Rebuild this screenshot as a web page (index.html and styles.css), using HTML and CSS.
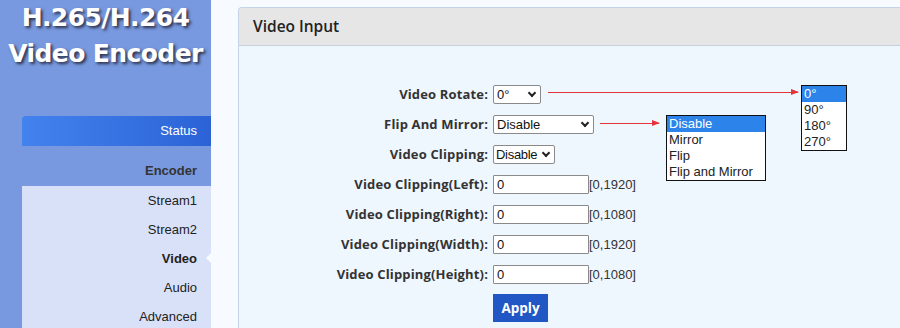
FILE: index.html
```html
<!DOCTYPE html>
<html>
<head>
<meta charset="utf-8">
<link rel="stylesheet" href="styles.css">
</head>
<body>
<aside class="sidebar">
  <div class="logo">
    <div class="logo-line">H.265/H.264</div>
    <div class="logo-line">Video Encoder</div>
  </div>
  <nav class="nav">
    <div class="nav-status">Status</div>
    <div class="nav-group">Encoder</div>
    <ul class="nav-sub">
      <li>Stream1</li>
      <li>Stream2</li>
      <li class="active">Video</li>
      <li>Audio</li>
      <li>Advanced</li>
    </ul>
  </nav>
</aside>
<main class="main">
  <section class="panel">
    <header class="panel-head">Video Input</header>
    <div class="form">
      <label class="lbl">Video Rotate:</label>
      <div class="ctl">
        <span class="sel sel-rot">0°<i class="chev"></i></span>
        <span class="arrow arrow-rot"></span>
        <ul class="dd dd-rot"><li class="on">0°</li><li>90°</li><li>180°</li><li>270°</li></ul>
      </div>
      <label class="lbl">Flip And Mirror:</label>
      <div class="ctl">
        <span class="sel sel-flip">Disable<i class="chev"></i></span>
        <span class="arrow arrow-flip"></span>
        <ul class="dd dd-flip"><li class="on">Disable</li><li>Mirror</li><li>Flip</li><li>Flip and Mirror</li></ul>
      </div>
      <label class="lbl">Video Clipping:</label>
      <div class="ctl"><span class="sel sel-clip">Disable<i class="chev"></i></span></div>
      <label class="lbl">Video Clipping(Left):</label>
      <div class="ctl"><span class="inp">0</span><span class="rng">[0,1920]</span></div>
      <label class="lbl">Video Clipping(Right):</label>
      <div class="ctl"><span class="inp">0</span><span class="rng">[0,1080]</span></div>
      <label class="lbl">Video Clipping(Width):</label>
      <div class="ctl"><span class="inp">0</span><span class="rng">[0,1920]</span></div>
      <label class="lbl">Video Clipping(Height):</label>
      <div class="ctl"><span class="inp">0</span><span class="rng">[0,1080]</span></div>
      <div></div>
      <div class="ctl ctl-btn"><button class="btn">Apply</button></div>
    </div>
  </section>
</main>
</body>
</html>
```
FILE: styles.css
```css
html, body { margin: 0; padding: 0; }
body {
  width: 900px; height: 328px; overflow: hidden;
  display: flex;
  font-family: "Liberation Sans", Arial, sans-serif;
  font-size: 13px;
  color: #222;
  background: #f7fbff;
}
.sidebar {
  width: 211px; flex: none;
  background: #7899df;
  display: flex; flex-direction: column;
  overflow: hidden;
}
.logo {
  flex: none;
  height: 116px;
  box-sizing: border-box;
  padding-top: 0;
  text-align: center;
  color: #fff;
  font-family: "DejaVu Sans", sans-serif;
  font-weight: bold;
  font-size: 25px;
  letter-spacing: -0.6px;
  line-height: 36px;
  text-shadow: 2px 2px 3px rgba(30,30,50,.85);
}
.nav { margin-left: 22px; flex: 1; display: flex; flex-direction: column; }
.nav-status {
  flex: none;
  height: 30px; line-height: 30px;
  background: linear-gradient(90deg, #4383ee, #2b63d6);
  border-top-left-radius: 4px;
  color: #fff; text-align: right; padding-right: 14px;
}
.nav-group {
  flex: none;
  height: 40px; line-height: 50px;
  text-align: right; padding-right: 14px;
  font-weight: bold; color: #333;
}
.nav-sub {
  list-style: none; margin: 0; padding: 0;
  background: #d9e1f8; flex: 1;
}
.nav-sub li {
  height: 29px; line-height: 29px;
  text-align: right; padding-right: 14px;
  position: relative;
}
.nav-sub li.active { font-weight: bold; }
.nav-sub li.active::after {
  content: ""; position: absolute; right: 0; top: 9px;
  border: 5px solid transparent; border-right-color: #f7fbff;
  border-left-width: 0;
}
.main { flex: 1; padding: 7px 0 0 27px; display: flex; flex-direction: column; }
.panel {
  flex: 1;
  border: 1px solid #c5d3e6; border-right: none; border-bottom: none;
  border-top-left-radius: 4px;
  background: #eef6fe;
}
.panel-head {
  height: 37px; line-height: 37px;
  background: #e6e6e6;
  border-bottom: 1px solid #c4d0de;
  border-top-left-radius: 4px;
  padding-left: 14px;
  font-family: "Open Sans", sans-serif;
  font-weight: 600; font-size: 15.5px; color: #222;
}
.form {
  display: grid;
  grid-template-columns: 249px 1fr;
  column-gap: 5px;
  grid-auto-rows: 30px;
  padding-top: 33px;
}
.lbl {
  text-align: right; line-height: 30px;
  font-family: "Open Sans", sans-serif;
  font-weight: bold; font-size: 13px; color: #333;
  letter-spacing: 0.15px;
}
.ctl { position: relative; display: flex; align-items: center; }
.sel, .inp {
  box-sizing: border-box; height: 19px;
  border: 1px solid #8a8a8a; border-radius: 2px;
  background: #fff; padding: 0 3px;
  line-height: 17px; font-size: 13px; color: #111;
  position: relative;
}
.sel-rot { width: 48px; }
.sel-flip { width: 101px; }
.sel-clip { width: 62px; padding-left: 2px; letter-spacing: -0.3px; }
.inp { width: 96px; border-radius: 1px; }
.chev {
  position: absolute; right: 5px; top: 4px;
  width: 4px; height: 4px;
  border-right: 2px solid #222; border-bottom: 2px solid #222;
  transform: rotate(45deg);
}
.rng { font-size: 13px; color: #333; }
.ctl-btn { align-items: flex-start; padding-top: 5px; }
.btn {
  width: 55px; height: 28px;
  border: none; border-radius: 0;
  background: #2156c5; color: #fff;
  font-family: "Open Sans", sans-serif; font-weight: bold; font-size: 13.5px;
  padding: 0;
}
.arrow {
  position: absolute; height: 1px; background: #e3343c; top: 14px;
}
.arrow::after {
  content: ""; position: absolute; right: -1px; top: -3px;
  border-left: 8px solid #e3343c;
  border-top: 3.5px solid transparent; border-bottom: 3.5px solid transparent;
}
.arrow-rot { left: 55px; width: 250px; top: 13px; }
.arrow-flip { left: 107px; width: 59px; }
.dd {
  position: absolute; margin: 0; padding: 0; list-style: none;
  background: #fff; border: 1px solid #111;
  font-size: 13px; line-height: 16px; color: #222;
  z-index: 2;
}
.dd li { padding-left: 2px; height: 16px; }
.dd li.on { background: #2c84ea; color: #fff; }
.dd-rot { left: 308px; top: 6px; width: 44px; }
.dd-flip { left: 173px; top: 6px; width: 98px; }
```
